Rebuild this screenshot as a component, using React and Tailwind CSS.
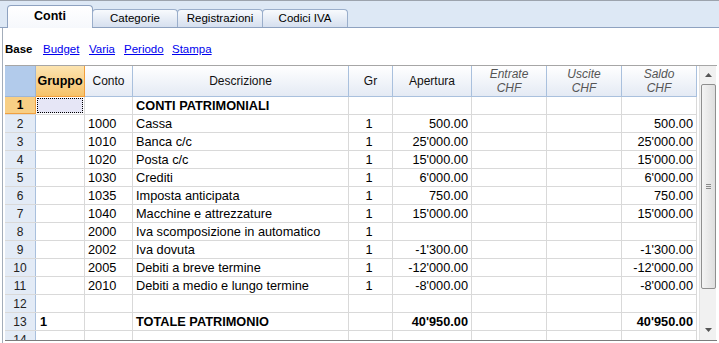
import React from "react";

const rows = [
  { n: "1", g: "", c: "", d: "CONTI PATRIMONIALI", gr: "", a: "", s: "", bold: true, sel: true },
  { n: "2", g: "", c: "1000", d: "Cassa", gr: "1", a: "500.00", s: "500.00" },
  { n: "3", g: "", c: "1010", d: "Banca c/c", gr: "1", a: "25'000.00", s: "25'000.00" },
  { n: "4", g: "", c: "1020", d: "Posta c/c", gr: "1", a: "15'000.00", s: "15'000.00" },
  { n: "5", g: "", c: "1030", d: "Crediti", gr: "1", a: "6'000.00", s: "6'000.00" },
  { n: "6", g: "", c: "1035", d: "Imposta anticipata", gr: "1", a: "750.00", s: "750.00" },
  { n: "7", g: "", c: "1040", d: "Macchine e attrezzature", gr: "1", a: "15'000.00", s: "15'000.00" },
  { n: "8", g: "", c: "2000", d: "Iva scomposizione in automatico", gr: "1", a: "", s: "" },
  { n: "9", g: "", c: "2002", d: "Iva dovuta", gr: "1", a: "-1'300.00", s: "-1'300.00" },
  { n: "10", g: "", c: "2005", d: "Debiti a breve termine", gr: "1", a: "-12'000.00", s: "-12'000.00" },
  { n: "11", g: "", c: "2010", d: "Debiti a medio e lungo termine", gr: "1", a: "-8'000.00", s: "-8'000.00" },
  { n: "12", g: "", c: "", d: "", gr: "", a: "", s: "" },
  { n: "13", g: "1", c: "", d: "TOTALE PATRIMONIO", gr: "", a: "40'950.00", s: "40'950.00", bold: true },
  { n: "14", g: "", c: "", d: "", gr: "", a: "", s: "" },
];

const cell = "h-full border-r border-[#d9d9d9] flex items-center shrink-0";

function Row({ r }) {
  const b = r.bold ? "font-bold" : "";
  return (
    <div className="flex h-[18px] shrink-0 border-b border-[#d9d9d9] text-[12.75px] text-black">
      <div
        className={`w-[31px] h-full shrink-0 flex items-center justify-center border-r text-[12px] ${
          r.sel
            ? "bg-[#f8cf85] border-[#f0a040] border-b font-bold"
            : "bg-[#e3ebf6] border-[#a9c0dd] text-[#222]"
        }`}
      >
        {r.n}
      </div>
      <div className={`${cell} w-[49px] ${r.sel ? "p-[1px]" : "pl-[4px]"} ${b}`}>
        {r.sel ? (
          <div className="w-full h-full bg-[#e6e6f6] border border-dotted border-black" />
        ) : (
          r.g
        )}
      </div>
      <div className={`${cell} w-[48px] pl-[3px]`}>{r.c}</div>
      <div className={`${cell} w-[216px] pl-[3px] ${b}`}>{r.d}</div>
      <div className={`${cell} w-[44px] justify-center pr-[3px]`}>{r.gr}</div>
      <div className={`${cell} w-[79px] justify-end pr-[3px] ${b}`}>{r.a}</div>
      <div className={`${cell} w-[75px]`}></div>
      <div className={`${cell} w-[75px]`}></div>
      <div className={`${cell} w-[75px] justify-end pr-[3px] ${b}`}>{r.s}</div>
    </div>
  );
}

const hdr =
  "h-full shrink-0 border-r border-b border-[#a9c0dd] bg-gradient-to-b from-white to-[#e4eaf4] flex items-center justify-center text-[12px] text-[#111]";

function Hdr2({ t, w }) {
  return (
    <div className={`${hdr} ${w} flex-col leading-[14px] italic text-[#555] text-[11.5px]`}>
      <span>{t}</span>
      <span>CHF</span>
    </div>
  );
}

export default function App() {
  return (
    <div className="w-[719px] h-[343px] overflow-hidden bg-white flex flex-col font-['Liberation_Sans',Arial,sans-serif]">
      {/* tab strip */}
      <div className="h-[28px] shrink-0 bg-[#dde8f5] border-t border-[#9ca3ad] border-b border-b-[#8ea2c0] flex items-end pl-[7px]">
        <div className="w-[86px] h-[23px] -mb-px rounded-t-[4px] border border-b-0 border-[#8ea2c0] bg-gradient-to-b from-white to-[#f6f8fc] flex items-center justify-center font-bold text-[12.5px] text-black pb-[1px]">
          Conti
        </div>
        {["Categorie", "Registrazioni", "Codici IVA"].map((t) => (
          <div
            key={t}
            className="w-[86px] h-[18px] rounded-t-[4px] border border-b-0 border-[#9aaecb] bg-gradient-to-b from-[#f8fafd] to-[#d6e0ef] flex items-center justify-center text-[11.5px] text-black -ml-px first:ml-0"
          >
            {t}
          </div>
        ))}
      </div>

      {/* panel */}
      <div className="flex-1 ml-[2px] border-l border-[#a3adba] flex flex-col min-h-0">
        <div className="h-[37px] shrink-0 pt-[14px] pl-[2px] flex items-start text-[11.5px] leading-[14px]">
          <span className="w-[38px] shrink-0 font-bold text-black">Base</span>
          <span className="w-[46px] shrink-0"><span className="text-[#0000ee] underline">Budget</span></span>
          <span className="w-[35px] shrink-0"><span className="text-[#0000ee] underline">Varia</span></span>
          <span className="w-[48px] shrink-0"><span className="text-[#0000ee] underline">Periodo</span></span>
          <span className="text-[#0000ee] underline">Stampa</span>
        </div>

        <div className="h-[276px] shrink-0 ml-[2px] mr-[2px] border-t border-[#a6a6a6] border-b border-b-[#7c7c7c] flex overflow-hidden">
          <div className="flex flex-col overflow-hidden">
            <div className="flex h-[31px] shrink-0">
              <div className="w-[31px] h-full shrink-0 bg-[#b2cbeb] border-r border-b border-[#9db6d8]" />
              <div className="w-[49px] h-full shrink-0 bg-gradient-to-b from-[#fce4b0] to-[#f6c268] border-r border-b border-[#f29e3a] flex items-center justify-center font-bold text-[12.5px] text-black">
                Gruppo
              </div>
              <div className={`${hdr} w-[48px]`}>Conto</div>
              <div className={`${hdr} w-[216px]`}>Descrizione</div>
              <div className={`${hdr} w-[44px]`}>Gr</div>
              <div className={`${hdr} w-[79px]`}>Apertura</div>
              <Hdr2 t="Entrate" w="w-[75px]" />
              <Hdr2 t="Uscite" w="w-[75px]" />
              <Hdr2 t="Saldo" w="w-[75px]" />
            </div>
            {rows.map((r) => (
              <Row key={r.n} r={r} />
            ))}
          </div>

          {/* scrollbar */}
          <div className="w-[17px] ml-[2px] shrink-0 bg-[#f1f1f1] border-l border-[#e2e2e2] flex flex-col items-center">
            <div className="h-[18px] w-full flex items-center justify-center">
              <svg width="7" height="4" viewBox="0 0 7 4">
                <path d="M0 4 L3.5 0 L7 4 Z" fill="#555" />
              </svg>
            </div>
            <div className="w-[15px] h-[205px] rounded-[2px] border border-[#8f8f8f] bg-gradient-to-r from-[#f4f4f4] to-[#dedede] flex flex-col items-center justify-center gap-[1px]">
              <div className="w-[5px] h-px bg-[#8a8a8a]" />
              <div className="w-[5px] h-px bg-[#8a8a8a]" />
              <div className="w-[5px] h-px bg-[#8a8a8a]" />
            </div>
            <div className="flex-1" />
            <div className="h-[20px] w-full flex items-center justify-center">
              <svg width="7" height="4" viewBox="0 0 7 4">
                <path d="M0 0 L3.5 4 L7 0 Z" fill="#555" />
              </svg>
            </div>
          </div>
        </div>
      </div>
    </div>
  );
}
